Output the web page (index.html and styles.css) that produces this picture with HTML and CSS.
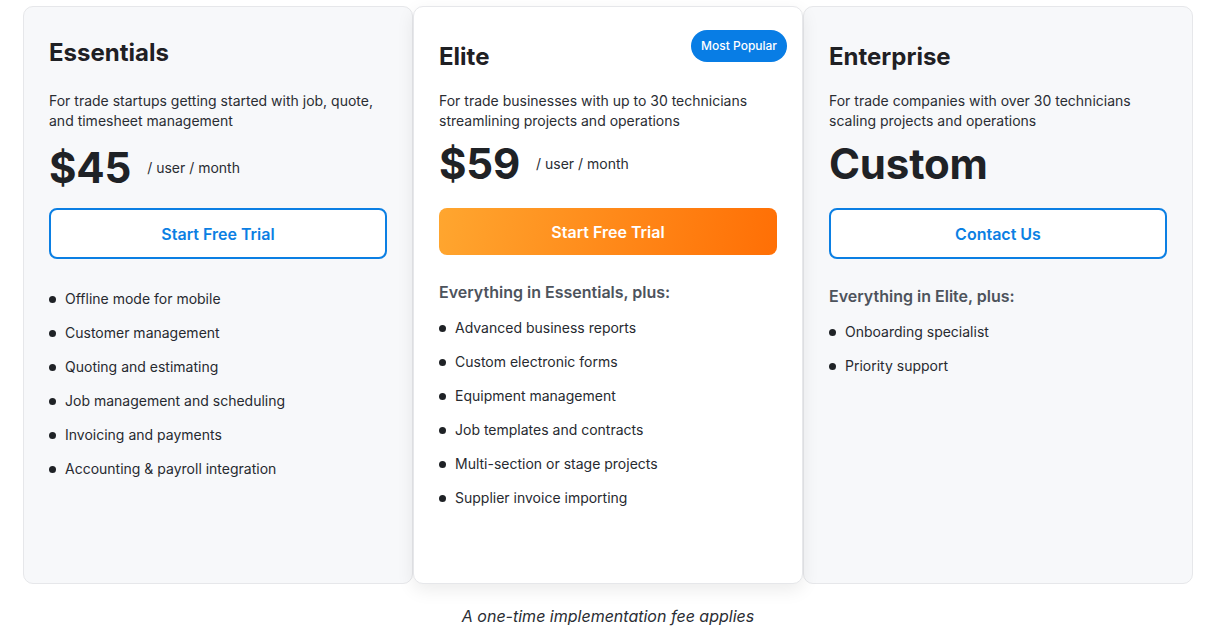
FILE: index.html
```html
<!DOCTYPE html>
<html lang="en">
<head>
<meta charset="utf-8">
<title>Pricing</title>
<link rel="stylesheet" href="styles.css">
</head>
<body>
<main class="pricing">
  <div class="plans">
    <section class="card card-basic">
      <h2 class="plan-name">Essentials</h2>
      <p class="plan-desc">For trade startups getting started with job, quote, and timesheet management</p>
      <div class="price-row"><span class="price">$45</span><span class="per">/ user / month</span></div>
      <a class="btn btn-outline">Start Free Trial</a>
      <ul class="features features-first">
        <li>Offline mode for mobile</li>
        <li>Customer management</li>
        <li>Quoting and estimating</li>
        <li>Job management and scheduling</li>
        <li>Invoicing and payments</li>
        <li>Accounting &amp; payroll integration</li>
      </ul>
    </section>
    <section class="card card-featured">
      <span class="badge">Most Popular</span>
      <h2 class="plan-name plan-name-low">Elite</h2>
      <p class="plan-desc plan-desc-tight">For trade businesses with up to 30 technicians streamlining projects and operations</p>
      <div class="price-row price-row-tight"><span class="price">$59</span><span class="per">/ user / month</span></div>
      <a class="btn btn-solid">Start Free Trial</a>
      <h3 class="plus">Everything in Essentials, plus:</h3>
      <ul class="features">
        <li>Advanced business reports</li>
        <li>Custom electronic forms</li>
        <li>Equipment management</li>
        <li>Job templates and contracts</li>
        <li>Multi-section or stage projects</li>
        <li>Supplier invoice importing</li>
      </ul>
    </section>
    <section class="card card-basic">
      <h2 class="plan-name plan-name-low">Enterprise</h2>
      <p class="plan-desc plan-desc-tight">For trade companies with over 30 technicians scaling projects and operations</p>
      <div class="price-row price-row-tight"><span class="price">Custom</span></div>
      <a class="btn btn-outline btn-late">Contact Us</a>
      <h3 class="plus">Everything in Elite, plus:</h3>
      <ul class="features">
        <li>Onboarding specialist</li>
        <li>Priority support</li>
      </ul>
    </section>
  </div>
  <p class="note">A one-time implementation fee applies</p>
</main>
</body>
</html>
```

FILE: styles.css
```css
* { box-sizing: border-box; }
html, body { margin: 0; padding: 0; background: #ffffff; }
body {
  font-family: Inter, "Noto Sans", "Liberation Sans", sans-serif;
  color: #212327;
}
.pricing {
  width: 1170px;
  margin-left: 23px;
  padding-top: 6px;
}
.plans {
  display: grid;
  grid-template-columns: repeat(3, 390px);
  align-items: stretch;
}
.card {
  position: relative;
  height: 578px;
  border: 1px solid #e6e7ea;
  border-radius: 10px;
  padding: 30px 25px 29px;
  display: flex;
  flex-direction: column;
}
.card-basic { background: #f7f8fa; }
.card-featured {
  background: #ffffff;
  box-shadow: 0 6px 18px rgba(0, 0, 0, 0.08);
  z-index: 1;
}
.badge {
  position: absolute;
  top: 23px;
  right: 15px;
  height: 32px;
  padding: 0 10px;
  border-radius: 16px;
  background: #087de5;
  color: #ffffff;
  font-size: 12px;
  font-weight: 500;
  line-height: 32px;
}
.plan-name {
  margin: 0;
  font-size: 24px;
  line-height: 32px;
  font-weight: 700;
  color: #1f2024;
}
.plan-name-low { margin-top: 4px; }
.plan-desc {
  margin: 22px 0 0;
  font-size: 14px;
  line-height: 20px;
  color: #2a2d33;
}
.plan-desc-tight { margin-top: 18px; }
.price-row {
  margin-top: 13px;
  display: flex;
  align-items: center;
  height: 48px;
}
.price-row-tight { margin-top: 9px; }
.price {
  font-size: 42px;
  line-height: 48px;
  font-weight: 700;
  color: #1f2226;
  letter-spacing: -0.2px;
}
.per {
  margin-left: 16px;
  font-size: 14px;
  line-height: 20px;
  color: #2a2d33;
}
.btn {
  display: flex;
  align-items: center;
  justify-content: center;
  margin-top: 16px;
  border-radius: 8px;
  font-size: 16px;
  font-weight: 600;
  cursor: pointer;
}
.btn-outline {
  height: 51px;
  border: 2px solid #0b7fe3;
  background: #ffffff;
  color: #0b7fe3;
}
.btn-late { margin-top: 20px; }
.btn-solid {
  margin-top: 20px;
  height: 47px;
  background: linear-gradient(100deg, #ffa62f 0%, #ff8a1a 50%, #ff6f05 100%);
  color: #ffffff;
}
.plus {
  margin: 25px 0 0;
  font-size: 16px;
  line-height: 24px;
  font-weight: 600;
  color: #4d535c;
}
.features {
  list-style: none;
  margin: 14px 0 0;
  padding: 0;
  display: flex;
  flex-direction: column;
  gap: 14px;
}
.features-first { margin-top: 30px; }
.features li {
  display: flex;
  align-items: center;
  font-size: 14px;
  line-height: 20px;
  color: #272a30;
}
.features li::before {
  content: "";
  width: 7px;
  height: 7px;
  border-radius: 50%;
  background: #1f2226;
  margin: 0 9px 0 0;
  flex: none;
}
.note {
  margin: 20px 0 0;
  text-align: center;
  font-size: 16px;
  line-height: 24px;
  font-style: italic;
  color: #2a2d33;
}
```
